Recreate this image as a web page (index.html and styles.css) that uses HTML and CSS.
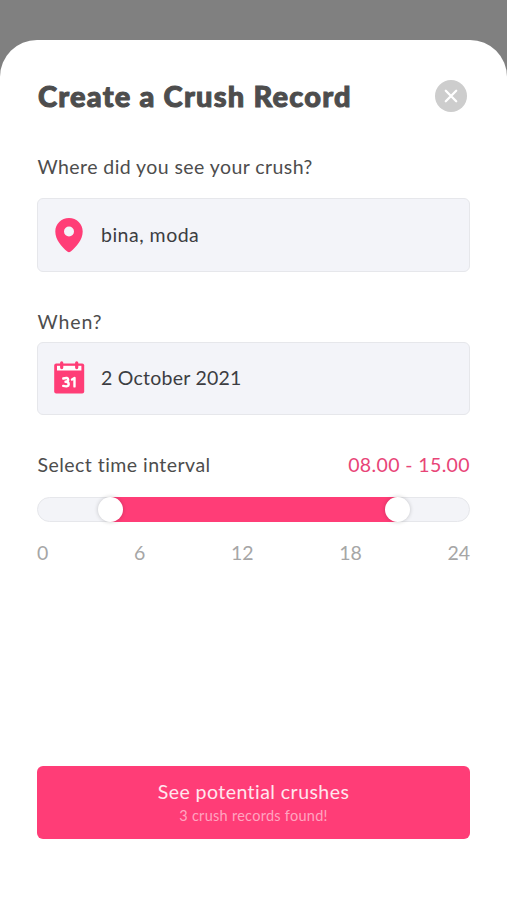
FILE: index.html
```html
<!DOCTYPE html>
<html lang="en">
<head>
<meta charset="utf-8">
<title>Create a Crush Record</title>
<link rel="stylesheet" href="styles.css">
</head>
<body>
<main class="sheet">
  <header class="header">
    <h1 class="title">Create a Crush Record</h1>
    <button class="close" aria-label="Close">
      <svg width="32" height="32" viewBox="0 0 32 32"><path d="M10.800 10.800l10.400 10.400M21.200 10.800L10.800 21.200" fill="none" stroke="#fff" stroke-width="2.300" stroke-linecap="round"/></svg>
    </button>
  </header>

  <section class="group place">
    <h2 class="label"><span class="t-where">Where did you see your crush?</span></h2>
    <div class="field">
      <svg class="icon" width="32" height="36" viewBox="0 0 32 36"><path fill="#ff3d77" fill-rule="evenodd" d="M16 1C8.300 1 2.300 7 2.300 14.400c0 8.300 6.300 15.300 12 20.100a2.600 2.600 0 0 0 3.400 0c5.700-4.800 12-11.800 12-20.100C29.700 7 23.700 1 16 1zm0 8.500a5 5 0 1 1 0 10 5 5 0 0 1 0-10z"/></svg>
      <span class="value t-place">bina, moda</span>
    </div>
  </section>

  <section class="group date">
    <h2 class="label"><span class="t-when">When?</span></h2>
    <div class="field">
      <svg class="icon" width="32" height="36" viewBox="0 0 32 36">
        <rect x="1.200" y="3.500" width="30" height="30" rx="2" fill="#ff3d77"/>
        <path d="M4 5.800h24.400v4.700H4z" fill="#fff"/>
        <path d="M8.700 2.800v4.800M23.700 2.800v4.800" stroke="#ff3d77" stroke-width="3.200" stroke-linecap="round"/>
        <path d="M10.300 18.500q4.800-1.600 4.900 1.300q0 2-2.700 2q3.200 0 3.200 2.500q-.2 3-5.500 1.600M19 19.500l2.500-1.600v8.500" fill="none" stroke="#fff" stroke-width="2.400" stroke-linecap="round" stroke-linejoin="round"/>
      </svg>
      <span class="value t-date">2 October 2021</span>
    </div>
  </section>

  <section class="interval">
    <div class="interval-head">
      <h2 class="label"><span class="t-select">Select time interval</span></h2>
      <span class="range t-range">08.00 - 15.00</span>
    </div>
    <div class="track"><div class="fill"></div><i class="thumb from"></i><i class="thumb to"></i></div>
    <div class="ticks"><span>0</span><span>6</span><span>12</span><span>18</span><span>24</span></div>
  </section>

  <button class="submit">
    <span class="submit-title t-see">See potential crushes</span>
    <span class="submit-note t-found">3 crush records found!</span>
  </button>
</main>
</body>
</html>
```
FILE: styles.css
```css
* { box-sizing: border-box; }
body {
  margin: 0;
  height: 900px;
  padding-top: 40px;
  background: #808080;
  font-family: Lato, "Open Sans", sans-serif;
  font-variant-ligatures: none;
  color: #4d4d4d;
  overflow: hidden;
}
h1, h2 { margin: 0; }
button { border: 0; font: inherit; padding: 0; }
.sheet {
  height: 860px;
  padding: 40px 37px 61px;
  background: #fff;
  border-radius: 37px 37px 0 0;
  display: flex;
  flex-direction: column;
}
.header { display: flex; justify-content: space-between; height: 32px; padding-right: 3px; }
.title {
  padding-left: 1px;
  font-size: 29px;
  line-height: 32px;
  font-weight: 900;
  letter-spacing: 1.2px;
  -webkit-text-stroke: 1px #4d4d4d;
  white-space: nowrap;
}
.close { width: 32px; height: 32px; border-radius: 50%; background: #cdcdcd; }
.close svg { display: block; }
.label { padding-left: .5px; font-size: 19.5px; line-height: 24px; font-weight: 400; white-space: nowrap; }
.place { margin-top: 43px; }
.place .field { margin-top: 19px; }
.date { margin-top: 38px; }
.date .field { height: 73px; margin-top: 8px; }
.date .icon { margin-top: -2px; }
.date .value { margin-top: -2px; }
.field {
  height: 74px;
  border: 1px solid #e6e7eb;
  border-radius: 6px;
  background: #f3f4f9;
  display: flex;
  align-items: center;
  padding-left: 15px;
}
.icon { flex: none; }
.value { margin-left: 16px; font-size: 19.5px; line-height: 24px; color: #3c3d42; white-space: nowrap; }
.t-where { letter-spacing: .43px; }
.t-when { letter-spacing: .9px; }
.t-select { letter-spacing: .46px; }
.t-place { letter-spacing: .5px; }
.t-date { letter-spacing: .24px; }
.interval { margin-top: 38px; }
.interval-head { display: flex; justify-content: space-between; }
.range { color: #e84577; font-size: 19.5px; line-height: 24px; letter-spacing: .38px; white-space: nowrap; }
.track {
  position: relative;
  height: 25px;
  margin-top: 20px;
  border: 1px solid #e6e7eb;
  border-radius: 13px;
  background: #f3f4f8;
}
.fill { margin: -1px 72px 0 73px; height: 25px; background: #ff3d77; }
.thumb {
  position: absolute;
  top: -1px;
  width: 25px;
  height: 25px;
  border-radius: 50%;
  background: #fff;
  box-shadow: 0 0 4px rgba(0, 0, 0, .2);
}
.from { left: 60px; }
.to { right: 59px; }
.ticks { display: flex; justify-content: space-between; margin-top: 19px; font-size: 19.5px; line-height: 24px; color: #a6a6a6; }
.submit {
  margin-top: auto;
  height: 73px;
  flex: none;
  border-radius: 6px;
  background: #ff3d77;
  color: #ffe6ee;
  display: flex;
  flex-direction: column;
  align-items: center;
  justify-content: center;
  font-variant-ligatures: none;
}
.submit-title { font-size: 19.5px; line-height: 24px; letter-spacing: .45px; }
.submit-note { font-size: 14.5px; line-height: 20px; margin-top: 2px; letter-spacing: .27px; color: #ffa5c0; }
```
